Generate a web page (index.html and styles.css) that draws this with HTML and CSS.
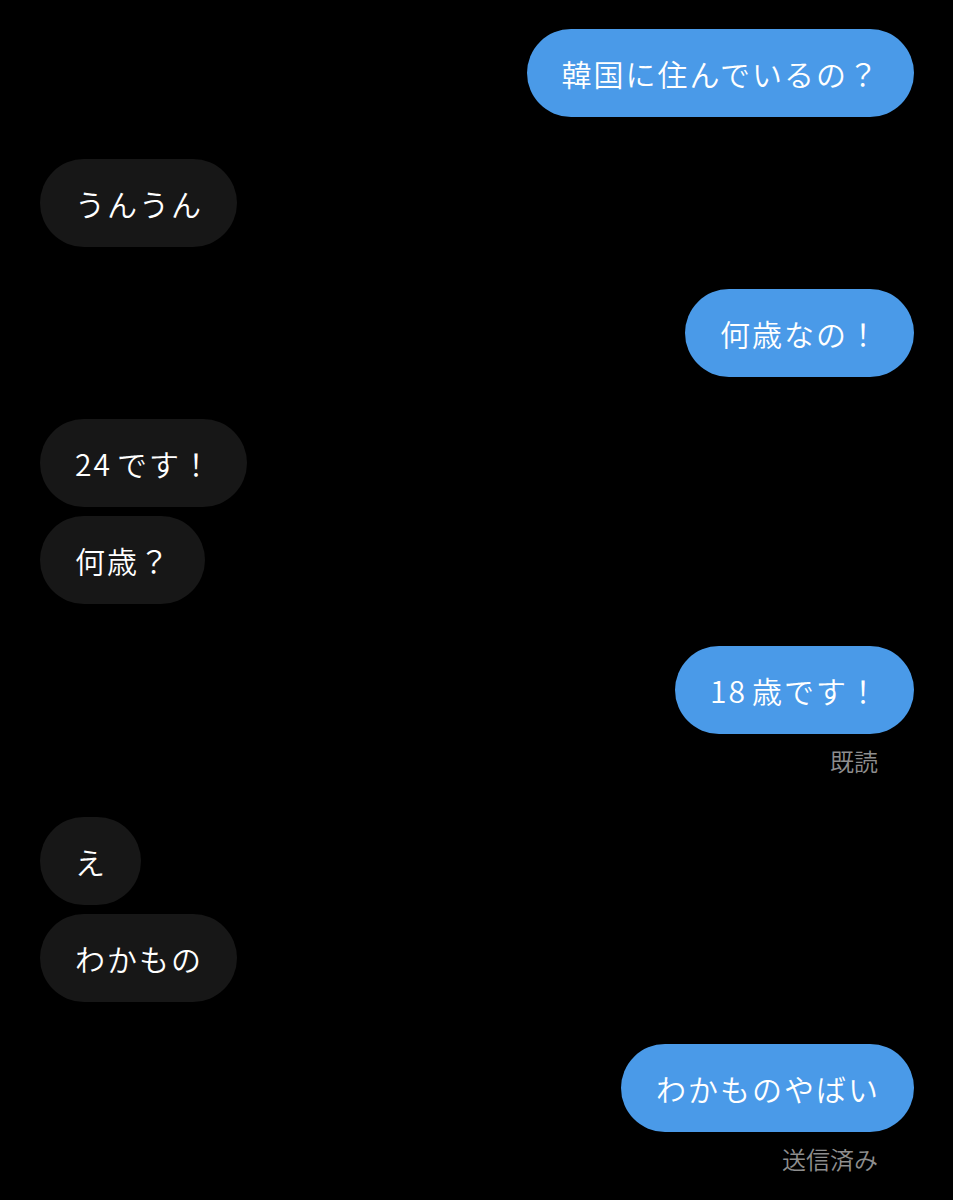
FILE: index.html
```html
<!DOCTYPE html>
<html lang="ja">
<head>
  <meta charset="UTF-8" />
  <meta name="viewport" content="width=device-width, initial-scale=1.0" />
  <title>メッセージ</title>
  <link rel="stylesheet" href="styles.css">
</head>
<body>
  <div class="chat">
    <div class="msg sent"><div class="bubble">韓国に住んでいるの？</div></div>
    <div class="msg recv"><div class="bubble">うんうん</div></div>
    <div class="msg sent"><div class="bubble">何歳なの！</div></div>
    <div class="msg recv"><div class="bubble"><span class="num">24</span>です！</div></div>
    <div class="msg recv grouped"><div class="bubble">何歳？</div></div>
    <div class="msg sent">
      <div class="bubble"><span class="num">18</span>歳です！</div>
      <div class="status">既読</div>
    </div>
    <div class="msg recv"><div class="bubble">え</div></div>
    <div class="msg recv grouped"><div class="bubble">わかもの</div></div>
    <div class="msg sent">
      <div class="bubble">わかものやばい</div>
      <div class="status">送信済み</div>
    </div>
  </div>
</body>
</html>
```

FILE: styles.css
```css
html, body {
  margin: 0;
  background: #000;
}
body {
  font-family: "Noto Sans CJK JP", "Noto Sans", sans-serif;
  color: #fff;
  min-height: 1200px;
}
.chat {
  display: flex;
  flex-direction: column;
  padding: 29px 39px 0 40px;
}
.msg {
  display: flex;
  flex-direction: column;
  margin-top: 42px;
}
.msg:first-child {
  margin-top: 0;
}
.msg.grouped {
  margin-top: 9px;
}
.msg.sent {
  align-items: flex-end;
}
.msg.recv {
  align-items: flex-start;
}
.bubble {
  height: 88px;
  box-sizing: border-box;
  padding: 0 34px 0 35px;
  border-radius: 44px;
  display: flex;
  align-items: center;
  font-size: 30px;
  font-weight: 350;
  letter-spacing: 2px;
  white-space: nowrap;
}
.bubble .num {
  margin-right: 5px;
}
.sent .bubble {
  background: #4a9ae8;
}
.recv .bubble {
  background: #171717;
}
.status {
  margin-top: 13px;
  padding-right: 36px;
  font-size: 24px;
  font-weight: 350;
  line-height: 28px;
  color: #8e8e8e;
}
```
